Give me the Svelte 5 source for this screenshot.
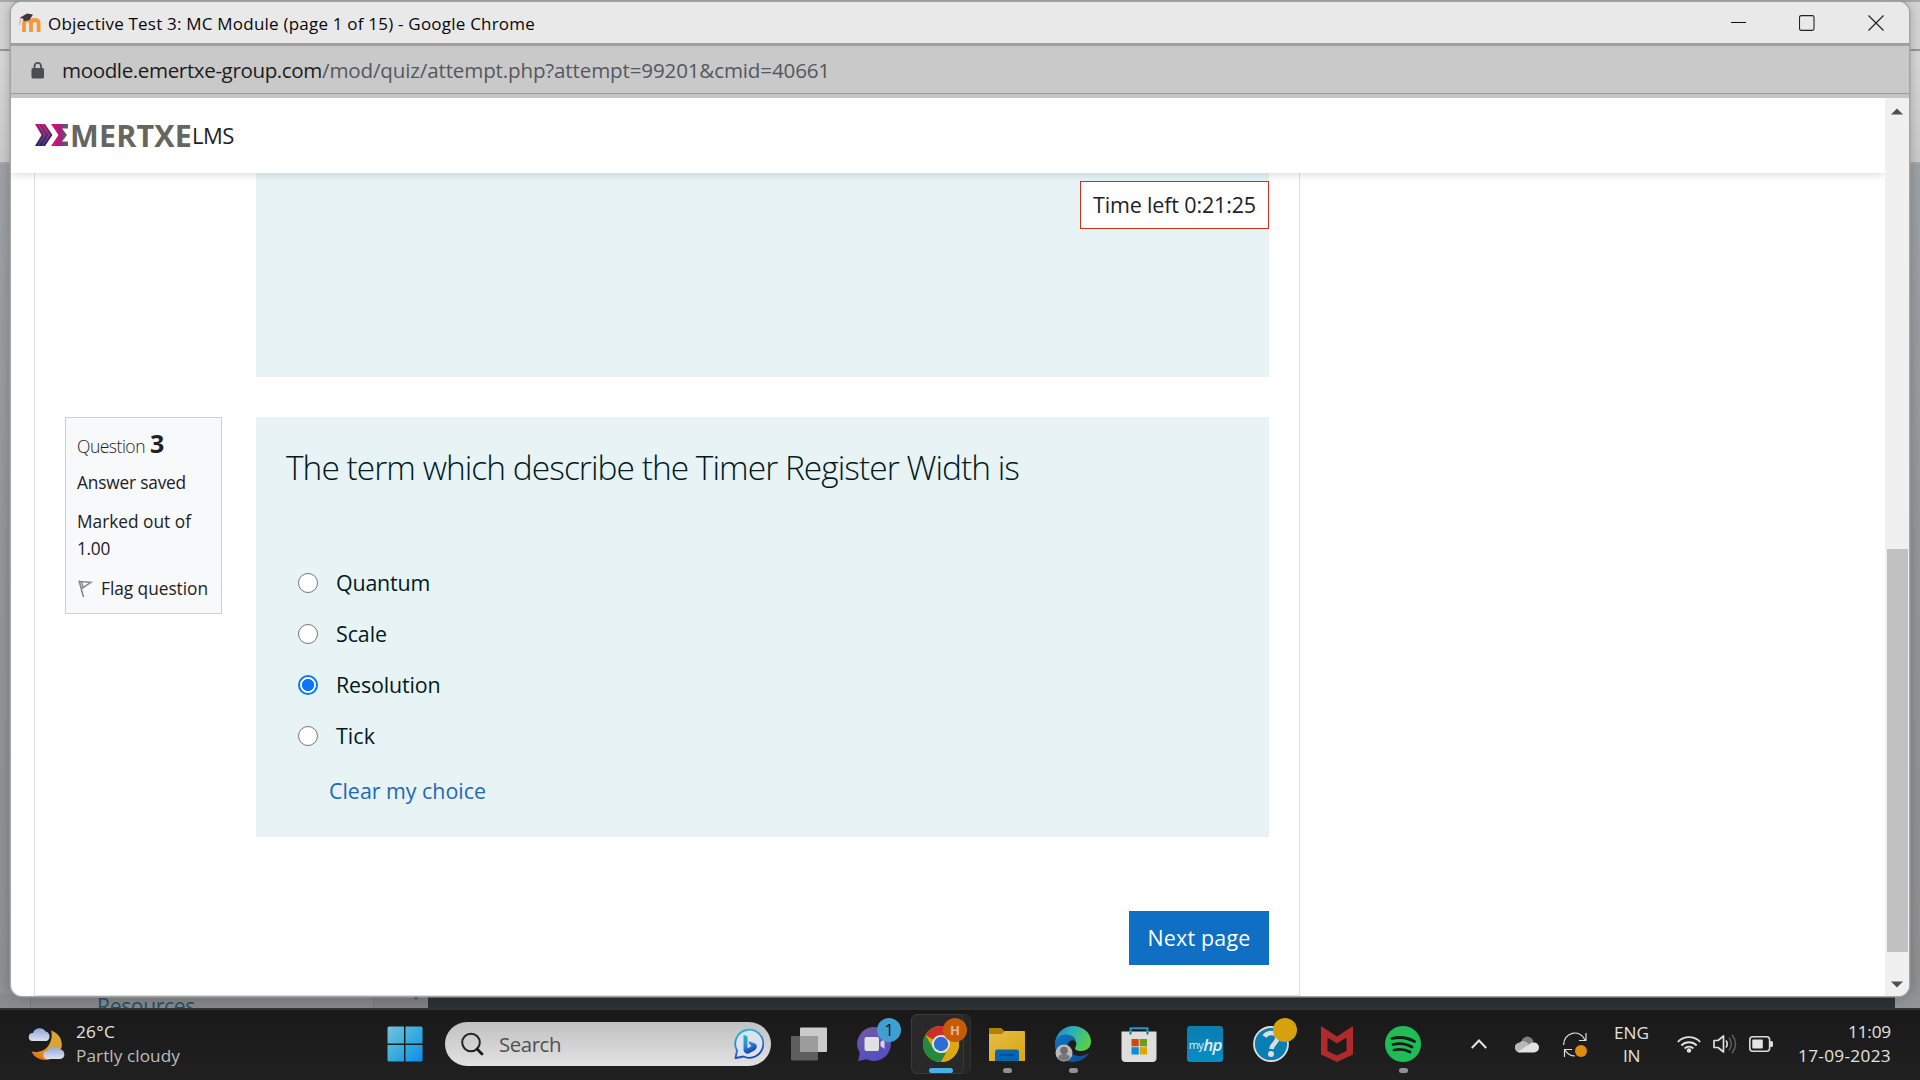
<script>
  // Tracks a line of text so that it occupies the given width in pixels.
  function track(node, width) {
    const natural = node.getBoundingClientRect().width;
    const spacing = (width - natural) / node.textContent.length;
    node.style.letterSpacing = `${spacing.toFixed(3)}px`;
  }

  const choices = [
    { label: 'Quantum', width: 94 },
    { label: 'Scale', width: 51 },
    { label: 'Resolution', width: 104.500 },
    { label: 'Tick', width: 39 }
  ];
  let selected = $state('Resolution');
</script>

<div class="desktop">
  <div class="backdrop">
    <div class="tabs"></div>
    <div class="tools"></div>
    <div class="rest"></div>
    <div class="strip">
      <div class="s-left"></div>
      <div class="s-nav"><span use:track={98}>Resources</span></div>
      <div class="s-bar"><svg width="8" height="5" viewBox="0 0 8 5"><path d="M1 0h6L4 3z" fill="#55585a" /></svg></div>
      <div class="s-dark"></div>
      <div class="s-right"></div>
    </div>
  </div>

  <div class="window">
    <div class="titlebar">
      <svg class="favicon" width="24" height="21" viewBox="0 0 24 21">
        <path d="M6 19V10.500q0-3.500 3.500-3.500T13 10.500V19M13 10.500q0-3.500 3.800-3.500t3.800 3.500V19" fill="none" stroke="#f7963a" stroke-width="3.800" />
        <path d="M1.500 5 9 .5 15 1.500 11.500 7 6 8.200 5 5.500z" fill="#3f3a38" />
        <path d="M2.500 5.500 1.500 12" stroke="#a99" stroke-width=".8" />
      </svg>
      <span class="wtitle" use:track={487}>Objective Test 3: MC Module (page 1 of 15) - Google Chrome</span>
      <div class="controls">
        <svg width="16" height="16" viewBox="0 0 16 16"><path d="M1 7.500h15" stroke="#111" /></svg>
        <svg width="16" height="16" viewBox="0 0 16 16"><rect x=".5" y=".6" width="14.500" height="14.800" rx="1.800" fill="none" stroke="#222" stroke-width="1.100" /></svg>
        <svg width="16" height="16" viewBox="0 0 16 16"><path d="M.5.5l15 15M15.500.5l-15 15" stroke="#222" stroke-width="1.200" /></svg>
      </div>
    </div>
    <div class="address">
      <svg width="14" height="17" viewBox="0 0 14 17">
        <rect x=".5" y="6" width="12.500" height="10.500" rx="1.500" fill="#4a4e52" />
        <path d="M3.500 7V4.200a3.250 3.250 0 0 1 6.500 0V7" fill="none" stroke="#4a4e52" stroke-width="1.800" />
      </svg>
      <span class="host" use:track={260}>moodle.emertxe-group.com</span><span class="path" use:track={508}>/mod/quiz/attempt.php?attempt=99201&amp;cmid=40661</span>
    </div>
    <div class="view">
      <div class="doc">
        <header>
          <svg class="mark" width="37" height="24" viewBox="0 0 37 24">
            <defs>
              <linearGradient id="m1" x1="0" y1="0" x2="0" y2="1"><stop offset="0" stop-color="#b3126e" /><stop offset=".5" stop-color="#63276f" /><stop offset="1" stop-color="#1f2263" /></linearGradient>
              <linearGradient id="m2" x1="0" y1="0" x2="1" y2="0"><stop offset="0" stop-color="#e01378" /><stop offset=".5" stop-color="#b31880" /><stop offset=".75" stop-color="#6b4a70" /><stop offset="1" stop-color="#66665f" /></linearGradient>
            </defs>
            <path d="M0 1h10l7.500 11L10 23H0l6.500-11z" fill="url(#m1)" />
            <path d="M3 1l7 11-7 11M7 1l7 11-7 11" fill="none" stroke="#fff" stroke-opacity=".3" stroke-width=".7" />
            <path d="M16 1h17v4.500H27L32 12l-5 6.500h6V23H16l7.500-11z" fill="url(#m2)" />
          </svg>
          <span class="brand" use:track={122}>MERTXE</span><span class="lms" use:track={42}>LMS</span>
        </header>
        <main>
          <section class="panel previous">
            <div class="timer"><span use:track={163}>Time left 0:21:25</span></div>
          </section>
          <section class="question">
            <aside>
              <h3><span class="q" use:track={68}>Question</span><b>3</b></h3>
              <p class="state"><span use:track={109}>Answer saved</span></p>
              <p class="grade"><span use:track={114}>Marked out of</span><br /><span use:track={33}>1.00</span></p>
              <p class="flag">
                <svg width="16" height="18" viewBox="0 0 16 18"><path d="M2 .8 6.500 17M1.800 1.500 14 2.300 5 8.300M4.500 2.600 6 7.300" fill="none" stroke="#828487" stroke-width="1.500" /></svg>
                <span use:track={107}>Flag question</span>
              </p>
            </aside>
            <div class="panel body">
              <h2><span use:track={733}>The term which describe the Timer Register Width is</span></h2>
              <div class="answers">
                {#each choices as c}
                  <label>
                    <input type="radio" name="answer" value={c.label} bind:group={selected} />
                    <i></i>
                    <span use:track={c.width}>{c.label}</span>
                  </label>
                {/each}
              </div>
              <a class="clear" href="#clear"><span use:track={157}>Clear my choice</span></a>
            </div>
          </section>
          <button class="next"><span use:track={103}>Next page</span></button>
        </main>
      </div>
      <div class="scrollbar">
        <svg width="12" height="7" viewBox="0 0 12 7"><path d="M0 6.500 6 .5l6 6z" fill="#505050" /></svg>
        <div class="track"><div class="thumb"></div></div>
        <svg width="12" height="7" viewBox="0 0 12 7"><path d="M0 .5h12l-6 6z" fill="#505050" /></svg>
      </div>
    </div>
  </div>

  <div class="taskbar">
    <div class="weather">
      <svg width="37" height="34" viewBox="0 0 37 34">
        <defs>
          <linearGradient id="mn" x1="1" y1="0" x2=".2" y2="1"><stop offset="0" stop-color="#d3a83a" /><stop offset=".55" stop-color="#dfa02c" /><stop offset="1" stop-color="#e5701b" /></linearGradient>
          <linearGradient id="cl" x1="0" y1="0" x2="0" y2="1"><stop offset="0" stop-color="#8ea6dc" /><stop offset="1" stop-color="#dbe0ee" /></linearGradient>
        </defs>
        <path d="M23 3.500C31 6 35 13 33.500 20.500 31 31 19 36 9.500 31 6.500 29.500 4.500 27 3.500 24.500 10 26 17 24 20.500 18.500 23.500 14 24.500 8.500 23 3.500z" fill="url(#mn)" />
        <path d="M4.500 14a4 4 0 0 1 .5-8 7 7 0 0 1 12.500-1.500A5 5 0 0 1 18.500 14z" fill="url(#cl)" />
        <path d="M19 32a4 4 0 0 1 .8-8 6.500 6.500 0 0 1 11.700-1.500A4.800 4.800 0 0 1 32.500 32z" fill="url(#cl)" />
      </svg>
      <div class="lines"><span use:track={39}>26°C</span><span class="dim" use:track={104}>Partly cloudy</span></div>
    </div>

    <div class="slot start">
      <svg width="36" height="36" viewBox="0 0 36 36">
        <defs><linearGradient id="wn" x1="0" y1="0" x2="1" y2="1"><stop offset="0" stop-color="#76c2dc" /><stop offset=".5" stop-color="#38ade0" /><stop offset="1" stop-color="#0b8cee" /></linearGradient></defs>
        <path d="M2 .5h15v17H.5V2A1.500 1.500 0 0 1 2 .5zM18.500.5H34A1.500 1.500 0 0 1 35.500 2v15.500h-17zM.5 19H17v16.500H2A1.500 1.500 0 0 1 .5 34zM18.500 19h17v15a1.500 1.500 0 0 1-1.500 1.500H18.500z" fill="url(#wn)" />
      </svg>
    </div>
    <div class="search">
      <svg width="24" height="24" viewBox="0 0 24 24"><circle cx="11" cy="10.500" r="8.800" fill="none" stroke="#242424" stroke-width="2" /><path d="M17 17l5 5" stroke="#1a1a1a" stroke-width="2.800" stroke-linecap="round" /></svg>
      <span use:track={62}>Search</span>
      <svg class="bing" width="30" height="32" viewBox="0 0 30 32">
        <defs><linearGradient id="bg" x1="0" y1="0" x2=".3" y2="1"><stop offset="0" stop-color="#23bfd3" /><stop offset=".6" stop-color="#2b82d6" /><stop offset="1" stop-color="#1a44b8" /></linearGradient></defs>
        <path d="M1.500 30 3 22.500A14 14 0 1 1 9.500 28.500z" fill="#dce4ea" stroke="url(#bg)" stroke-width="1.800" stroke-linejoin="round" />
        <path d="M9.500 6.500 13.500 8.500V20.500L17.500 18 15.500 16.500 14.500 13 21 15.500Q23.500 17 22.500 20 21.800 21.800 20 22.800L14.500 25.500Q12.500 26 11 24.800 9.500 23.800 9.500 22z" fill="url(#bg)" />
      </svg>
    </div>

    <div class="apps">
      <div class="slot">
        <svg width="36" height="36" viewBox="0 0 36 36"><rect x="9" y="1.500" width="27" height="24.500" rx="1" fill="#cbcbcb" /><rect y="10" width="27" height="24.500" rx="1" fill="#6a6a6a" fill-opacity=".85" /><path d="M9 10h18v16H9z" fill="#9c9c9c" /></svg>
      </div>
      <div class="slot">
        <svg width="36" height="36" viewBox="0 0 36 36">
          <defs><linearGradient id="ch" x1="0" y1="0" x2=".3" y2="1"><stop offset="0" stop-color="#75589f" /><stop offset="1" stop-color="#5450c0" /></linearGradient></defs>
          <path d="M17 1a17 17 0 1 1-7.500 32.300L1.200 35 2.800 27A17 17 0 0 1 17 1z" fill="url(#ch)" />
          <rect x="7.500" y="11" width="14.500" height="14" rx="2" fill="#e0e0e4" /><path d="M23.500 16l4-3v10l-4-3z" fill="#d6d6ea" />
        </svg>
        <span class="badge blue">1</span>
      </div>
      <div class="slot active">
        <div class="stack"></div><div class="tile"></div>
        <svg width="36" height="36" viewBox="0 0 36 36">
          <circle cx="18" cy="18" r="18" fill="#dba914" />
          <path d="M2.400 9A18 18 0 0 1 33.600 9H18a9 9 0 0 0-7.800 4.500z" fill="#c9302c" />
          <path d="M2.400 9 10.200 22.500A9 9 0 0 0 18 27h5.200L18 36A18 18 0 0 1 2.400 9z" fill="#22893e" />
          <path d="M25.800 22.500 18 36A18 18 0 0 0 33.600 9H18a9 9 0 0 1 7.800 13.500z" fill="#dba914" />
          <circle cx="18" cy="18" r="9" fill="#e6e6e6" /><circle cx="18" cy="18" r="7.200" fill="#2a6fd6" />
        </svg>
        <span class="badge orange">H</span><i class="run wide"></i>
      </div>
      <div class="slot">
        <svg width="36" height="36" viewBox="0 0 36 36">
          <defs><linearGradient id="fo" x1="0" y1="0" x2="1" y2="1"><stop offset="0" stop-color="#e3bc4c" /><stop offset="1" stop-color="#dba60d" /></linearGradient></defs>
          <path d="M0 3q0-1 1-1h11l4 3.500-4 4H0z" fill="#b67e05" /><path d="M0 8h12.500L16 5h19q1 0 1 1v29H0z" fill="url(#fo)" />
          <path d="M6 35V26q0-2.500 2.500-2.500h19Q30 23.500 30 26v9z" fill="#0865b2" /><path d="M11.500 29h13" stroke="#064582" stroke-width="1.700" stroke-linecap="round" />
        </svg><i class="run"></i>
      </div>
      <div class="slot">
        <svg width="36" height="36" viewBox="0 0 36 36">
          <defs>
            <linearGradient id="e1" x1="0" y1="0" x2="1" y2=".5"><stop offset="0" stop-color="#1c7fc4" /><stop offset=".45" stop-color="#2ab0bb" /><stop offset="1" stop-color="#57cf47" /></linearGradient>
            <linearGradient id="e2" x1="0" y1="0" x2="1" y2="1"><stop offset="0" stop-color="#1273c0" /><stop offset="1" stop-color="#0d4c92" /></linearGradient>
          </defs>
          <path d="M0 17C1 7 9 0 18 0c10 0 18 7 18 15.500 0 6-4.500 9.500-9.500 9.500-5 0-7.500-1.500-6-4 2-3 .5-6.500-3-8C11 10.500 3 11 0 17z" fill="url(#e1)" />
          <path d="M0 17c1-6 6-9 12-8.500 5 .4 9 3.500 9 7-4-3-8.500 0-8.500 5 0 6 6 9.500 12 9.500 4 0 7.500-2 9.500-3.500C31 32.500 25 36 18 36 8 36-1 28 0 17z" fill="url(#e2)" />
          <circle cx="9" cy="27" r="8.500" fill="#b9b9b9" /><circle cx="9" cy="24.500" r="3.800" fill="#6d6d6d" /><path d="M3 32a6 4 0 0 1 12 0 8 8 0 0 1-12 0z" fill="#777" />
        </svg><i class="run"></i>
      </div>
      <div class="slot">
        <svg width="36" height="36" viewBox="0 0 36 36">
          <path d="M9.500 8V2.200h17V8" fill="none" stroke="#2497c8" stroke-width="2" />
          <path d="M.5 5.500h35V32a4 4 0 0 1-4 4h-27a4 4 0 0 1-4-4z" fill="#dedede" /><path d="M9.500 5.500v3M26.500 5.500v3" stroke="#1a6d99" stroke-width="2" />
          <path d="M10.500 13h7.300v7.300h-7.300z" fill="#d1451d" /><path d="M18.700 13H26v7.300h-7.300z" fill="#6f9f08" /><path d="M10.500 21.200h7.300v7.300h-7.300z" fill="#058fd6" /><path d="M18.700 21.200H26v7.300h-7.300z" fill="#e0a403" />
        </svg>
      </div>
      <div class="slot"><div class="myhp"><span>my</span><b>hp</b></div></div>
      <div class="slot">
        <svg width="36" height="36" viewBox="0 0 36 36"><circle cx="18" cy="18" r="17" fill="#087fb5" stroke="#dcdcdc" stroke-width="1.800" /><path d="M11.500 10.500Q13.500 7 18.500 7c4.500 0 6.500 3 5.500 6.500-1 4-5 4.500-5.500 9.500" fill="none" stroke="#dedede" stroke-width="4.600" /><circle cx="18" cy="28" r="3" fill="#dedede" /></svg>
        <span class="badge gold"></span>
      </div>
      <div class="slot">
        <svg width="36" height="36" viewBox="0 0 36 36"><path fill-rule="evenodd" d="M2 0 18 10.500 34 0v28.500L18 36 2 28.500zM8.500 11.500v13.500L18 29.500l9.500-4.500V11.500L18 17.500z" fill="#b02a2b" /></svg>
      </div>
      <div class="slot">
        <svg width="36" height="36" viewBox="0 0 36 36"><circle cx="18" cy="18" r="18" fill="#20bd57" /><path d="M7 12.500q12-3 22.500 3M8 18.500q10.500-2.500 19 2.500M9 24q9-2 16 2" fill="none" stroke="#161d18" stroke-linecap="round" stroke-width="2.800" /></svg><i class="run"></i>
      </div>
    </div>

    <div class="tray">
      <div class="t chev"><svg width="16" height="10" viewBox="0 0 16 10"><path d="M.8 9 8 1.500 15.200 9" fill="none" stroke="#e4e4e4" stroke-width="2" /></svg></div>
      <div class="t"><svg width="24" height="17" viewBox="0 0 24 17"><path d="M6 5.500Q9 0 13.500.7 17.500 1.500 18.500 6L12 12z" fill="#7e7e7e" /><path d="M5 16.500a5 5 0 0 1-.5-10Q9 3 14 8l-8 8z" fill="#b8b8b8" /><path d="M3 15.500 14 8.500Q16 6 19 6.500a5 5 0 0 1 0 10H5q-1 0-2-1z" fill="#e2e2e2" /></svg></div>
      <div class="t"><svg width="24" height="25" viewBox="0 0 24 25"><path d="M.8 13A11 11 0 0 1 22 8M23 1v7.500h-7M1.500 25v-7.500H9M2 18q3.500 6 10 6" fill="none" stroke="#ddd" stroke-width="1.200" /><circle cx="18" cy="19" r="6" fill="#e28a09" /></svg></div>
      <div class="lang"><span use:track={35}>ENG</span><span use:track={17}>IN</span></div>
      <div class="t wifi"><svg width="24" height="18" viewBox="0 0 24 18"><path d="M.8 7a15.500 15.500 0 0 1 22.400 0M4.300 10.500a10.800 10.800 0 0 1 15.400 0M7.600 13.500a6.200 6.200 0 0 1 8.800 0" fill="none" stroke="#e0e0e0" stroke-width="1.800" /><circle cx="12" cy="15.500" r="2.200" fill="#e0e0e0" /></svg></div>
      <div class="t"><svg width="24" height="20" viewBox="0 0 24 20"><path d="M1 6.500h4L10.500 2v16L5 13.500H1z" fill="none" stroke="#ddd" stroke-width="1.700" stroke-linejoin="round" /><path d="M13 6.500q2.500 3.500 0 7" fill="none" stroke="#ddd" stroke-width="1.600" /><path d="M16 3.500q4.500 6.500 0 13M19 .8q7 9 0 18.400" fill="none" stroke="#5c5c5c" stroke-width="1.600" /></svg></div>
      <div class="t"><svg width="24" height="16" viewBox="0 0 24 16"><rect x=".8" y=".8" width="19.800" height="14.400" rx="3" fill="none" stroke="#dcdcdc" stroke-width="1.600" /><rect x="3.300" y="3.500" width="10.500" height="9" rx=".8" fill="#e4e4e4" /><path d="M21 5h1.500q1.500 0 1.500 1.500v3q0 1.500-1.500 1.500H21z" fill="#dcdcdc" /></svg></div>
      <div class="clock"><span use:track={43}>11:09</span><span use:track={93}>17-09-2023</span></div>
    </div>
  </div>
</div>

<style>
  :global(body) { margin: 0; overflow: hidden; }
  .desktop, .desktop * { box-sizing: border-box; }
  .desktop { position: relative; width: 1920px; height: 1080px; overflow: hidden; display: flex; flex-direction: column; background: #97999b; font-family: 'Open Sans', 'Noto Sans', sans-serif; color: #1d2125; }
  .desktop span { white-space: nowrap; display: inline-block; }
  svg { display: block; flex: none; }
  h2, h3, p { margin: 0; font-weight: 400; }

  .backdrop { height: 1008px; display: flex; flex-direction: column; }
  .tabs { height: 51px; background: linear-gradient(#a9a9a9 0 2px, #d6d6d6 2px); border-bottom: 2px solid #989898; }
  .tools { height: 113px; background: linear-gradient(#dadada, #cccccc); border-bottom: 2px solid #aaa; }
  .rest { flex: 1; background: linear-gradient(#9ea3a7, #94979a 50%, #8f9294); }
  .strip { height: 14px; display: flex; font-size: 21px; }
  .s-left { width: 30px; background: #898c8e; }
  .s-nav { width: 343px; padding-left: 66px; overflow: hidden; background: #858789; border-left: 1px solid #76797b; color: #1e4f6d; line-height: 24px; }
  .s-nav span { margin-top: -3px; }
  .s-bar { width: 55px; background: #7e8183; display: flex; justify-content: flex-end; padding: 3px 8px 0 0; border-left: 1px solid #75787a; }
  .s-dark { flex: 1; background: #2c3135; }
  .s-right { width: 25px; background: #929598; }

  .window { position: absolute; left: 11px; top: 2px; width: 1898px; height: 994px; border-radius: 11px; overflow: hidden; background: #fff; display: flex; flex-direction: column; box-shadow: 0 0 0 1.500px #a3a3a3, 0 0 14px rgba(0, 0, 0, .3); }
  .titlebar { height: 44px; background: #e9e9e9; border-bottom: 3px solid #a0a0a0; display: flex; align-items: center; padding: 0 25px 0 7px; }
  .favicon { margin-top: 1px; }
  .wtitle { margin-left: 6px; font-size: 17px; color: #080808; line-height: 26px; margin-top: 2px; }
  .controls { margin-left: auto; display: flex; gap: 53px; margin-top: 1px; }
  .address { height: 52px; background: #c9c9c9; border-bottom: 4px solid #c5c5c5; box-shadow: inset 0 -1px #9a9a9a; display: flex; align-items: center; padding-left: 20px; font-size: 20.600px; line-height: 28px; }
  .host { margin-left: 17px; color: #1b1d20; }
  .path { color: #55585c; }
  .view { flex: 1; display: flex; min-height: 0; }
  .doc { width: 1874px; display: flex; flex-direction: column; clip-path: inset(0); }
  header { position: relative; z-index: 1; height: 75px; padding: 0 0 1px 24px; display: flex; align-items: center; background: #fff; box-shadow: 0 2px 8px rgba(0, 0, 0, .13); }
  .brand { margin-left: -2px; font-size: 30.500px; line-height: 36px; font-weight: 700; color: #66665f; }
  .lms { font-size: 22px; line-height: 30px; color: #1d2125; margin-top: -1px; }
  main { margin-left: 23px; width: 1266px; height: 823px; border: 1px solid #dcdedf; border-top: 0; padding: 0 30px; display: flex; flex-direction: column; }
  .panel { background: #e7f3f5; color: #001a1e; }
  .previous { position: relative; flex: none; height: 204px; margin-left: 191px; }
  .timer { position: absolute; top: 8px; right: 0; width: 189px; height: 48px; border: 1px solid #ca3120; background: #fff; color: #1d2125; padding-left: 12px; font-size: 21.500px; line-height: 46px; }
  .question { margin-top: 40px; display: flex; gap: 34px; align-items: flex-start; }
  aside { width: 157px; height: 197px; background: #f8f9fa; border: 1px solid #cad0d7; padding: 11px 0 0 11px; font-size: 17.300px; line-height: 27px; }
  h3 { display: flex; gap: 5px; align-items: baseline; height: 30px; font-size: 17.500px; line-height: 29px; }
  h3 .q { font-weight: 300; }
  h3 b { font-size: 25px; line-height: 28px; font-weight: 700; }
  .state { margin-top: 10px; }
  .grade { margin-top: 12px; }
  .flag { margin-top: 13px; display: flex; gap: 8px; align-items: center; }
  .body { width: 1013px; height: 420px; padding: 28px 30px; }
  h2 { font-size: 33.500px; font-weight: 300; line-height: 44px; }
  .answers { display: flex; flex-direction: column; margin: 68px 0 0 12px; }
  label { position: relative; display: flex; align-items: center; height: 51px; gap: 18px; font-size: 21.400px; line-height: 30px; }
  input { position: absolute; opacity: 0; margin: 0; }
  label i { width: 20px; height: 20px; border-radius: 50%; border: 1.500px solid #767676; background: #fff; }
  label input:checked + i { border: 2px solid #0a75ff; background: radial-gradient(circle, #0a75ff 0 5.700px, #fff 6.400px); }
  .clear { display: block; margin: 7px 0 0 43px; font-size: 21.400px; line-height: 46px; color: #2169b8; text-decoration: none; }
  .next { margin-top: 74px; align-self: flex-end; width: 140px; height: 54px; border: 0; background: #0f6fc5; color: #fff; font: 400 21.400px/54px 'Open Sans', sans-serif; padding: 0; }
  .scrollbar { width: 24px; background: #f0f0f0; display: flex; flex-direction: column; align-items: center; justify-content: space-between; padding: 10px 0 8px; }
  .track { height: 841px; padding: 421px 0 0 1px; }
  .thumb { width: 21px; height: 403px; background: #c1c1c1; }

  .taskbar { position: relative; height: 72px; background: linear-gradient(#191919, #202020); border-top: 2px solid #303132; display: flex; align-items: center; padding-bottom: 2px; color: #e2e2e2; font-size: 17.200px; }
  .weather { width: 343px; padding-left: 28px; display: flex; gap: 11px; align-items: center; }
  .lines, .lang, .clock { display: flex; flex-direction: column; line-height: 24px; align-items: flex-start; }
  .dim { color: #bdbdbd; }
  .slot { position: relative; width: 66px; height: 66px; display: flex; align-items: center; justify-content: center; }
  .start { margin-left: 29px; }
  .search { margin: 0 5px 0 7px; width: 326px; height: 44px; border-radius: 22px; background: linear-gradient(#c1c1c1, #e2e2e2); display: flex; align-items: center; padding: 0 7px 0 15px; color: #505050; font-size: 20.400px; line-height: 30px; }
  .search span { margin-left: 15px; }
  .bing { margin-left: auto; }
  .apps { display: flex; }
  .badge { position: absolute; z-index: 2; left: 35px; top: 7px; width: 24px; height: 24px; border-radius: 50%; text-align: center; line-height: 24px; }
  .blue { background: #409fd2; color: #101820; font-size: 17px; }
  .orange { background: #c65a07; color: #e5b895; font: 700 13px/24px 'Open Sans', sans-serif; }
  .gold { background: #d6a10d; }
  .active svg { position: relative; }
  .tile, .stack { position: absolute; top: 3px; left: 3px; width: 53px; height: 60px; border: 1px solid #3a3a3a; border-radius: 6px; background: #292929; }
  .stack { width: 60px; background: #262626; border-color: #303030; }
  .run { position: absolute; bottom: 4px; left: 29px; width: 9px; height: 5px; border-radius: 3px; background: #919191; }
  .run.wide { left: 21px; width: 24px; background: #4ab0ec; }
  .myhp { width: 36px; height: 36px; border-radius: 3px; background: linear-gradient(#0a7db2, #078dc4); display: flex; align-items: center; justify-content: center; color: #e2eef4; font-size: 11px; letter-spacing: -.5px; }
  .myhp b { font: italic 600 17px 'Open Sans', sans-serif; letter-spacing: -1px; }
  .tray { flex: 1; display: flex; align-items: center; padding-left: 25px; }
  .t { width: 36px; display: flex; justify-content: center; }
  .t.chev, .t.chev + .t { margin-right: 12px; }
  .lang { width: 35px; margin-left: 21px; align-items: center; line-height: 23px; }
  .wifi { margin-left: 22px; }
  .clock { margin-left: auto; margin-right: 29px; align-items: flex-end; margin-top: -1px; }
</style>
